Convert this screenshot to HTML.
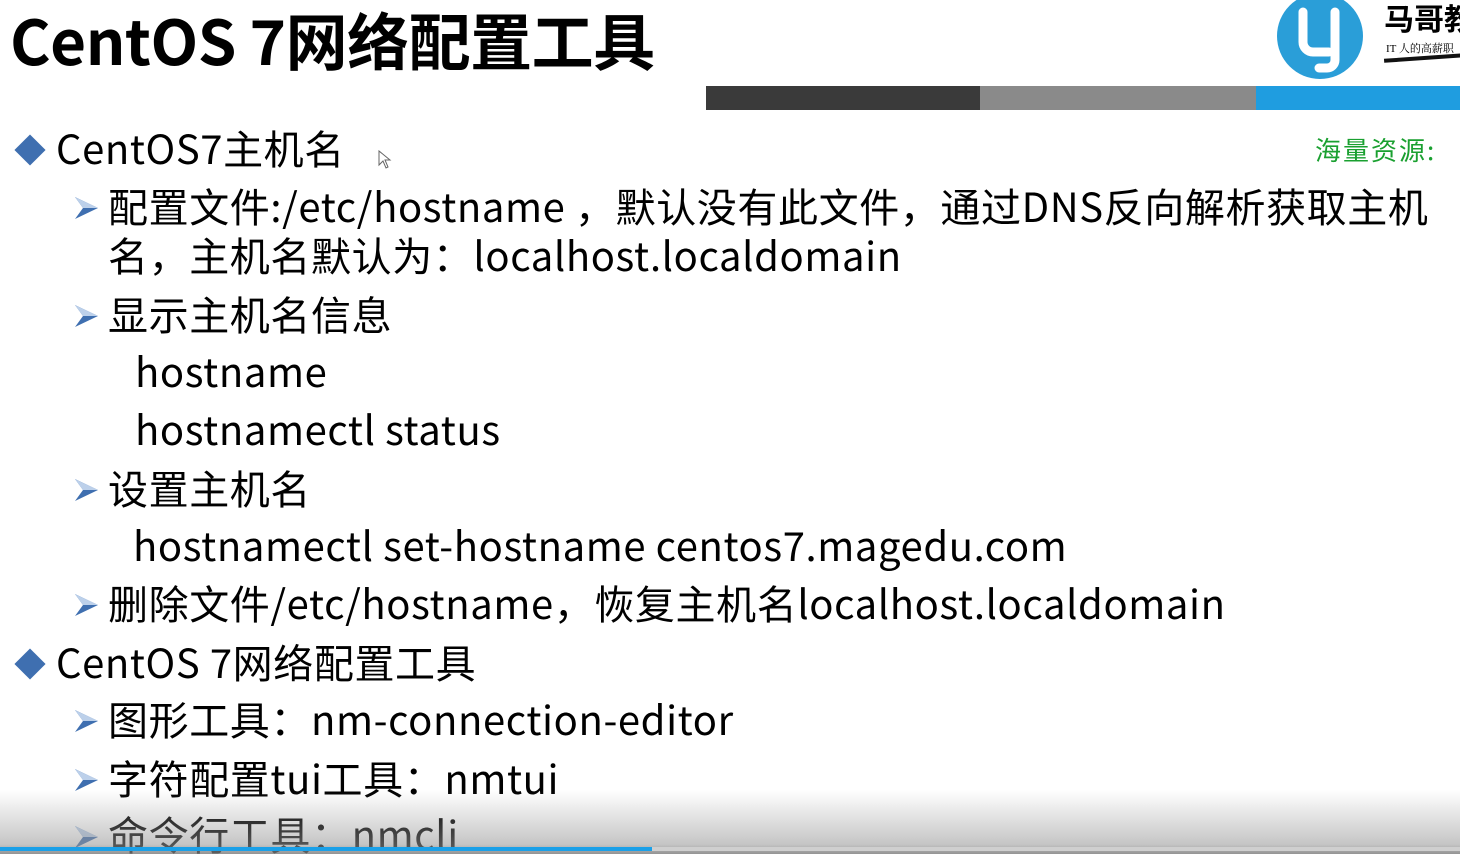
<!DOCTYPE html>
<html><head><meta charset="utf-8"><style>
body{margin:0;width:1460px;height:854px;overflow:hidden;background:#fff;position:relative;font-family:"Noto Sans CJK SC","Liberation Sans",sans-serif;color:#000}
.t{position:absolute;left:10px;top:-2px;font-size:62px;font-weight:bold;line-height:80px;white-space:nowrap;letter-spacing:-0.5px}
.l{position:absolute;white-space:nowrap;font-size:40px;line-height:44px;height:44px;letter-spacing:0.6px;margin-top:-3px}
.d{position:absolute;width:22px;height:22px;background:#3f6fb0;transform:rotate(45deg)}
.a{position:absolute;width:26px;height:26px}
.bar{position:absolute;top:86px;height:24px}
</style></head><body>
<div class="t">CentOS 7网络配置工具</div>
<div class="bar" style="left:706px;width:274px;background:#3a3a3a"></div>
<div class="bar" style="left:980px;width:276px;background:#8a8a8a"></div>
<div class="bar" style="left:1256px;width:204px;background:#1f9de0"></div>
<svg style="position:absolute;left:1277px;top:0" width="88" height="80" viewBox="0 0 88 80"><circle cx="43" cy="36" r="43" fill="#2a9ed8"/><path d="M26 12 v30 a10 10 0 0 0 10 10 h16" stroke="#fff" stroke-width="9" fill="none" stroke-linecap="round"/><path d="M58 12 v48 a8 8 0 0 1 -8 8 h-8" stroke="#fff" stroke-width="9" fill="none" stroke-linecap="round"/></svg>
<div style="position:absolute;left:1384px;top:-2px;font-size:30px;font-weight:bold;white-space:nowrap;line-height:38px">马哥教</div>
<div style="position:absolute;left:1386px;top:40px;font-size:11px;white-space:nowrap;font-family:'Liberation Serif','Noto Serif CJK SC',serif">IT 人的高薪职</div>
<div style="position:absolute;left:1384px;top:56px;width:80px;height:4px;background:#111;transform:rotate(-4deg)"></div>
<div style="position:absolute;left:1315px;top:133px;font-size:26px;color:#1aa030;white-space:nowrap;line-height:34px;letter-spacing:2px">海量资源:</div>

<div class="d" style="left:19px;top:139px"></div>
<div class="l" style="left:56px;top:128px">CentOS7主机名</div>
<svg style="position:absolute;left:378px;top:150px" width="14" height="20"><path d="M1 1 L1 15 L5 11 L8 18 L10 17 L7 10 L12 10 Z" fill="#fff" stroke="#666"/></svg>

<svg class="a" style="left:73px;top:195px" viewBox="0 0 26 26"><path d="M2 2 L25 13 L2 24 L10 13 Z" fill="#3f6fb0"/><path d="M2 2 L25 13 L10 13 Z" fill="#bcd0ea"/></svg>
<div class="l" style="left:108px;top:186px">配置文件:/etc/hostname ，默认没有此文件，通过DNS反向解析获取主机</div>
<div class="l" style="left:108px;top:235px">名，主机名默认为：localhost.localdomain</div>

<svg class="a" style="left:73px;top:303px" viewBox="0 0 26 26"><path d="M2 2 L25 13 L2 24 L10 13 Z" fill="#3f6fb0"/><path d="M2 2 L25 13 L10 13 Z" fill="#bcd0ea"/></svg>
<div class="l" style="left:108px;top:294px">显示主机名信息</div>
<div class="l" style="left:135px;top:351px">hostname</div>
<div class="l" style="left:135px;top:409px">hostnamectl status</div>

<svg class="a" style="left:73px;top:477px" viewBox="0 0 26 26"><path d="M2 2 L25 13 L2 24 L10 13 Z" fill="#3f6fb0"/><path d="M2 2 L25 13 L10 13 Z" fill="#bcd0ea"/></svg>
<div class="l" style="left:108px;top:468px">设置主机名</div>
<div class="l" style="left:133px;top:525px">hostnamectl set-hostname centos7.magedu.com</div>

<svg class="a" style="left:73px;top:592px" viewBox="0 0 26 26"><path d="M2 2 L25 13 L2 24 L10 13 Z" fill="#3f6fb0"/><path d="M2 2 L25 13 L10 13 Z" fill="#bcd0ea"/></svg>
<div class="l" style="left:108px;top:583px">删除文件/etc/hostname，恢复主机名localhost.localdomain</div>

<div class="d" style="left:19px;top:653px"></div>
<div class="l" style="left:56px;top:642px">CentOS 7网络配置工具</div>

<svg class="a" style="left:73px;top:708px" viewBox="0 0 26 26"><path d="M2 2 L25 13 L2 24 L10 13 Z" fill="#3f6fb0"/><path d="M2 2 L25 13 L10 13 Z" fill="#bcd0ea"/></svg>
<div class="l" style="left:108px;top:699px">图形工具：nm-connection-editor</div>

<svg class="a" style="left:73px;top:767px" viewBox="0 0 26 26"><path d="M2 2 L25 13 L2 24 L10 13 Z" fill="#3f6fb0"/><path d="M2 2 L25 13 L10 13 Z" fill="#bcd0ea"/></svg>
<div class="l" style="left:108px;top:758px">字符配置tui工具：nmtui</div>

<svg class="a" style="left:73px;top:824px" viewBox="0 0 26 26"><path d="M2 2 L25 13 L2 24 L10 13 Z" fill="#3f6fb0"/><path d="M2 2 L25 13 L10 13 Z" fill="#bcd0ea"/></svg>
<div class="l" style="left:108px;top:814px">命令行工具：nmcli</div>

<div style="position:absolute;left:0;top:790px;width:1460px;height:64px;background:linear-gradient(rgba(255,255,255,0),rgba(150,150,150,0.55) 85%,rgba(120,120,120,0.8))"></div>
<div style="position:absolute;left:0;top:847px;width:652px;height:4px;background:#1aa0e8"></div>
<div style="position:absolute;left:652px;top:847px;width:808px;height:4px;background:#cfcfcf"></div>
</body></html>
